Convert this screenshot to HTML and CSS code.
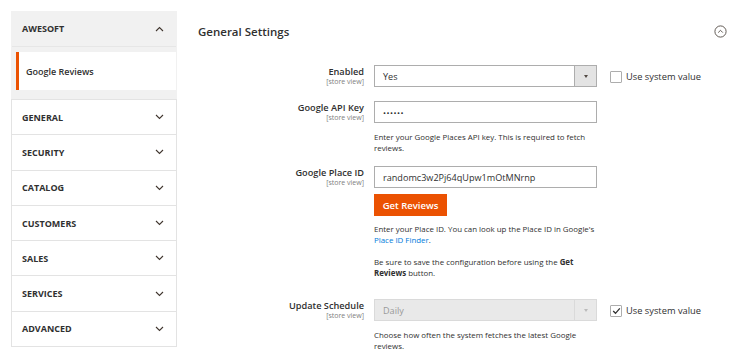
FILE: index.html
```html
<!DOCTYPE html>
<html>
<head>
<meta charset="utf-8">
<link rel="stylesheet" href="styles.css">
</head>
<body>
<div class="page">
  <aside class="nav">
    <div class="nav-group open">
      <div class="nav-title">
        <span>AWESOFT</span>
        <svg class="chev" width="9" height="6" viewBox="0 0 9 6"><path d="M1 5 L4.5 1.5 L8 5" fill="none" stroke="#41362f" stroke-width="1.1"/></svg>
      </div>
      <ul class="nav-items">
        <li class="nav-item active">Google Reviews</li>
      </ul>
    </div>
    <div class="nav-group"><div class="nav-title"><span>GENERAL</span><svg class="chev" width="9" height="6" viewBox="0 0 9 6"><path d="M1 1 L4.5 4.5 L8 1" fill="none" stroke="#41362f" stroke-width="1.1"/></svg></div></div>
    <div class="nav-group"><div class="nav-title"><span>SECURITY</span><svg class="chev" width="9" height="6" viewBox="0 0 9 6"><path d="M1 1 L4.5 4.5 L8 1" fill="none" stroke="#41362f" stroke-width="1.1"/></svg></div></div>
    <div class="nav-group"><div class="nav-title"><span>CATALOG</span><svg class="chev" width="9" height="6" viewBox="0 0 9 6"><path d="M1 1 L4.5 4.5 L8 1" fill="none" stroke="#41362f" stroke-width="1.1"/></svg></div></div>
    <div class="nav-group"><div class="nav-title"><span>CUSTOMERS</span><svg class="chev" width="9" height="6" viewBox="0 0 9 6"><path d="M1 1 L4.5 4.5 L8 1" fill="none" stroke="#41362f" stroke-width="1.1"/></svg></div></div>
    <div class="nav-group"><div class="nav-title"><span>SALES</span><svg class="chev" width="9" height="6" viewBox="0 0 9 6"><path d="M1 1 L4.5 4.5 L8 1" fill="none" stroke="#41362f" stroke-width="1.1"/></svg></div></div>
    <div class="nav-group"><div class="nav-title"><span>SERVICES</span><svg class="chev" width="9" height="6" viewBox="0 0 9 6"><path d="M1 1 L4.5 4.5 L8 1" fill="none" stroke="#41362f" stroke-width="1.1"/></svg></div></div>
    <div class="nav-group"><div class="nav-title"><span>ADVANCED</span><svg class="chev" width="9" height="6" viewBox="0 0 9 6"><path d="M1 1 L4.5 4.5 L8 1" fill="none" stroke="#41362f" stroke-width="1.1"/></svg></div></div>
  </aside>

  <main class="main">
    <div class="section-head">
      <h2 class="section-title">General Settings</h2>
      <svg class="collapse" width="13" height="13" viewBox="0 0 13 13"><circle cx="6.5" cy="6.5" r="5.6" fill="none" stroke="#514943" stroke-width="0.9"/><path d="M4.2 7.6 L6.5 5.3 L8.8 7.6" fill="none" stroke="#514943" stroke-width="0.9"/></svg>
    </div>

    <div class="field row-enabled">
      <div class="label"><span class="name">Enabled</span><span class="scope">[store view]</span></div>
      <div class="control">
        <div class="select"><span class="val">Yes</span><span class="btn"><span class="tri"></span></span></div>
      </div>
      <label class="sysval"><span class="box"></span>Use system value</label>
    </div>

    <div class="field row-key">
      <div class="label"><span class="name">Google API Key</span><span class="scope">[store view]</span></div>
      <div class="control">
        <div class="input"><span class="dots">••••••</span></div>
        <p class="note">Enter your Google Places API key. This is required to fetch reviews.</p>
      </div>
    </div>

    <div class="field row-place">
      <div class="label"><span class="name">Google Place ID</span><span class="scope">[store view]</span></div>
      <div class="control">
        <div class="input">randomc3w2Pj64qUpw1mOtMNrnp</div>
        <button class="action">Get Reviews</button>
        <p class="note">Enter your Place ID. You can look up the Place ID in Google's <a class="link">Place ID Finder</a>.</p>
        <p class="note">Be sure to save the configuration before using the <b>Get</b> <b>Reviews</b> button.</p>
      </div>
    </div>

    <div class="field row-schedule">
      <div class="label"><span class="name">Update Schedule</span><span class="scope">[store view]</span></div>
      <div class="control">
        <div class="select disabled"><span class="val">Daily</span><span class="btn"><span class="tri"></span></span></div>
        <p class="note">Choose how often the system fetches the latest Google reviews.</p>
      </div>
      <label class="sysval"><span class="box checked"><svg width="9" height="8" viewBox="0 0 9 8"><path d="M1.2 4 L3.5 6.3 L7.8 1.3" fill="none" stroke="#303030" stroke-width="1.3"/></svg></span>Use system value</label>
    </div>
  </main>
</div>
</body>
</html>
```

FILE: styles.css
```css
* { box-sizing: border-box; }
html, body { margin: 0; padding: 0; background: #fff; }
body {
  font-family: "Open Sans", "Liberation Sans", sans-serif;
  color: #303030;
  width: 746px;
  height: 360px;
  overflow: hidden;
}
.page {
  display: flex;
  align-items: flex-start;
  padding: 11px 0 0 11px;
}
.nav {
  width: 166px;
  flex: none;
  border-bottom: 1px solid #e3e3e3;
}
.nav-group {
  border-left: 1px solid #e3e3e3;
  border-right: 1px solid #e3e3e3;
}
.nav-group + .nav-group { border-top: 1px solid #e3e3e3; }
.nav-title {
  height: 34.3px;
  display: flex;
  align-items: center;
  justify-content: space-between;
  padding: 0 12px 0 10px;
  font-size: 9px;
  font-weight: 700;
  color: #303030;
}
.nav-group.open { background: #f1f1f1; border-color: #f1f1f1; }
.nav-group.open .nav-title {
  height: 36px;
  border-bottom: 1px solid #e6e6e6;
}
.nav-items {
  list-style: none;
  margin: 0;
  padding: 5px 0 9px 4px;
}
.nav-item {
  background: #fff;
  height: 38px;
  display: flex;
  align-items: center;
  padding-left: 7px;
  font-size: 9px;
  font-weight: 600;
  border-left: 3px solid #eb5202;
}
.chev { display: block; }

.main {
  flex: 1;
  padding: 0 19px 0 21px;
}
.section-head {
  display: flex;
  align-items: center;
  justify-content: space-between;
  height: 41px;
}
.section-title {
  margin: 0;
  font-size: 11.5px;
  font-weight: 600;
  color: #303030;
}
.collapse { display: block; }

.field {
  display: flex;
  align-items: flex-start;
}
.label {
  width: 176px;
  flex: none;
  display: flex;
  flex-direction: column;
  align-items: flex-end;
  padding-right: 10px;
  padding-top: 1px;
}
.name { font-size: 9.2px; font-weight: 600; line-height: 12px; }
.scope { font-size: 7px; color: #808080; line-height: 8px; }
.control { width: 223px; flex: none; }
.select, .input {
  height: 22px;
  border: 1px solid #adadad;
  background: #fff;
  display: flex;
  align-items: center;
  font-size: 9.1px;
  color: #303030;
}
.input { padding-left: 8px; }
.select .val { flex: 1; padding-left: 8px; }
.select .btn {
  width: 22px;
  height: 100%;
  background: #e3e3e3;
  border-left: 1px solid #adadad;
  display: flex;
  align-items: center;
  justify-content: center;
}
.tri {
  width: 0; height: 0;
  border-left: 2.5px solid transparent;
  border-right: 2.5px solid transparent;
  border-top: 3px solid #514943;
}
.select.disabled { background: #e9e9e9; border-color: #dadada; color: #999; }
.select.disabled .btn { background: #e9e9e9; border-left-color: #dadada; }
.select.disabled .tri { border-top-color: #bbb; }
.dots { font-size: 8px; letter-spacing: 0.5px; }

.sysval {
  display: flex;
  align-items: center;
  margin-left: 13px;
  margin-top: 5px;
  font-size: 9.3px;
  color: #303030;
}
.box {
  width: 12px; height: 12px;
  border: 1px solid #adadad;
  border-radius: 1px;
  background: #fff;
  margin-right: 4px;
  display: flex;
  align-items: center;
  justify-content: center;
}

.note {
  margin: 9px 0 0;
  font-size: 7.9px;
  line-height: 11px;
  color: #303030;
}
.link { color: #007bdb; }
.note b { font-weight: 700; }

.row-enabled { margin-top: 13px; }
.row-key { margin-top: 14px; }
.row-place { margin-top: 12px; }
.row-schedule { margin-top: 20px; }

.action {
  display: block;
  margin-top: 6px;
  height: 22px;
  width: 73px;
  border: none;
  background: #eb5202;
  color: #fff;
  font-family: "Open Sans", "Liberation Sans", sans-serif;
  font-size: 9.5px;
  font-weight: 600;
  padding: 0;
}
.row-place .note { margin-top: 8px; }
.row-place .note + .note { margin-top: 11px; }
```
